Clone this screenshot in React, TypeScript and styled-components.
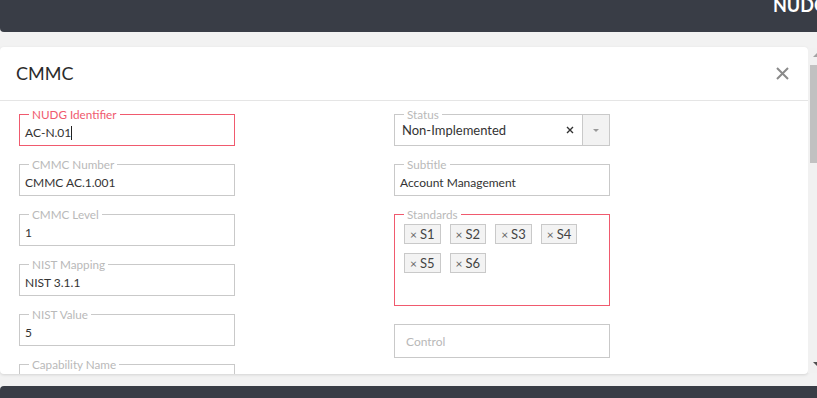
import styled, {createGlobalStyle} from "styled-components"

const GlobalStyle = createGlobalStyle`
  html, body {
    margin: 0;
    padding: 0;
    overflow: hidden;
  }
  body {
    background: #f2f2f2;
    font-family: Lato, "Noto Sans", sans-serif;
    color: #333;
  }
`
const Page = styled.div`
  width: 817px;
  height: 398px;
  display: flex;
  flex-direction: column;
  overflow: hidden;
`
const TopBar = styled.div`
  flex: none;
  height: 32px;
  background: #393d46;
  border-bottom-left-radius: 4px;
  display: flex;
  justify-content: flex-end;
  align-items: flex-start;
  overflow: hidden;
`
const Brand = styled.div`
  color: #fff;
  font-weight: 700;
  font-size: 18px;
  line-height: 18px;
  margin-top: -4px;
  margin-right: -10px;
  white-space: nowrap;
`
const Main = styled.div`
  flex: none;
  height: 327px;
  margin-top: 15px;
  display: flex;
`
const Card = styled.div`
  flex: none;
  width: 808px;
  background: #fff;
  border-radius: 4px;
  box-shadow: 0 1px 3px rgba(0, 0, 0, .13);
  display: flex;
  flex-direction: column;
  overflow: hidden;
`
const Header = styled.div`
  flex: none;
  height: 54px;
  box-sizing: border-box;
  border-bottom: 1px solid #e5e5e5;
  display: flex;
  align-items: center;
  justify-content: space-between;
  padding: 0 19px 1px 16px;
`
const Title = styled.div`
  font-size: 18px;
  color: #2b2b2b;
`
const CloseBtn = styled.button`
  border: 0;
  background: none;
  padding: 0;
  display: flex;
  cursor: pointer;
`
const Body = styled.div`
  flex: 1;
  overflow: hidden;
  display: grid;
  grid-template-columns: 216px 216px;
  column-gap: 159px;
  align-items: start;
  padding: 13px 0 0 19px;
`
const Column = styled.div`
  display: flex;
  flex-direction: column;
  gap: 18px;
`
const Box = styled.div<{ $active?: boolean; $h?: number }>`
  position: relative;
  height: ${p => p.$h ?? 32}px;
  box-sizing: border-box;
  border: 1px solid ${p => p.$active ? '#f05a6e' : '#c9c9c9'};
  background: #fff;
`
const Legend = styled.span<{ $active?: boolean }>`
  position: absolute;
  top: -8px;
  left: 9px;
  padding: 0 3px;
  background: #fff;
  font-size: 11.7px;
  line-height: 14px;
  color: ${p => p.$active ? '#f05a6e' : '#b9b9b9'};
  white-space: nowrap;
`
const Value = styled.div`
  padding: 10px 5px 0;
  font-size: 12px;
  line-height: 16px;
  color: #333;
  white-space: nowrap;
`
const Caret = styled.span`
  display: inline-block;
  width: 1px;
  height: 14px;
  background: #222;
  vertical-align: -3px;
`
const Select = styled.div`
  display: flex;
  height: 100%;
  align-items: stretch;
`
const SelectValue = styled.div`
  flex: 1;
  display: flex;
  align-items: center;
  padding-left: 7px;
  font-size: 13px;
  color: #333;
`
const Clear = styled.div`
  display: flex;
  align-items: center;
  padding: 0 8px 0 6px;
`
const Toggle = styled.div`
  width: 26px;
  border-left: 1px solid #c9c9c9;
  background: #f2f2f2;
  display: flex;
  align-items: center;
  justify-content: center;
`
const Arrow = styled.span`
  width: 0;
  height: 0;
  border-left: 3px solid transparent;
  border-right: 3px solid transparent;
  border-top: 3px solid #999;
  margin-top: 1px;
`
const Tags = styled.div`
  display: flex;
  flex-wrap: wrap;
  gap: 9px 9px;
  padding: 9px 9px;
`
const Tag = styled.div`
  height: 20px;
  box-sizing: border-box;
  border: 1px solid #c9c9c9;
  background: #f3f3f3;
  display: flex;
  align-items: center;
  gap: 3px;
  padding: 0 5px 0 5px;
  font-size: 13px;
  color: #444;
`
const TagX = styled.span`
  font-size: 12px;
  color: #666;
`
const Placeholder = styled.div`
  height: 100%;
  display: flex;
  align-items: center;
  padding-left: 11px;
  font-size: 12px;
  color: #b8b8b8;
`
const Scrollbar = styled.div`
  flex: none;
  width: 17px;
  margin: 1px 0;
  background: #f1f1f1;
  display: flex;
  flex-direction: column;
  align-items: center;
`
const ScrollUp = styled.span`
  margin-top: 5px;
  border-left: 4px solid transparent;
  border-right: 4px solid transparent;
  border-bottom: 4px solid #a3a3a3;
`
const Thumb = styled.div`
  align-self: stretch;
  margin: 8px 2px 0;
  height: 98px;
  background: #c1c1c1;
`
const ScrollDown = styled.span`
  margin-top: auto;
  margin-bottom: 7px;
  border-left: 4px solid transparent;
  border-right: 4px solid transparent;
  border-top: 4px solid #505050;
`
const Footer = styled.div`
  flex: none;
  height: 40px;
  margin-top: 12px;
  background: #393d46;
  border-top-left-radius: 4px;
`

function Field({label, value, active, caret}: { label: string; value: string; active?: boolean; caret?: boolean }) {
  return <Box $active={active}>
    <Legend $active={active}>{label}</Legend>
    <Value>{value}{caret && <Caret/>}</Value>
  </Box>
}

const standards = ['S1', 'S2', 'S3', 'S4', 'S5', 'S6']

export default function App() {
  return <Page>
    <GlobalStyle/>
    <TopBar>
      <Brand>NUDG</Brand>
    </TopBar>
    <Main>
      <Card>
        <Header>
          <Title>CMMC</Title>
          <CloseBtn>
            <svg width="13" height="13" viewBox="0 0 13 13">
              <path d="M1 1L12 12M12 1L1 12" stroke="#8a8a8a" strokeWidth="2" fill="none"/>
            </svg>
          </CloseBtn>
        </Header>
        <Body>
          <Column>
            <Field label="NUDG Identifier" value="AC-N.01" active caret/>
            <Field label="CMMC Number" value="CMMC AC.1.001"/>
            <Field label="CMMC Level" value="1"/>
            <Field label="NIST Mapping" value="NIST 3.1.1"/>
            <Field label="NIST Value" value="5"/>
            <Field label="Capability Name" value=""/>
          </Column>
          <Column>
            <Box>
              <Legend>Status</Legend>
              <Select>
                <SelectValue>Non-Implemented</SelectValue>
                <Clear>
                  <svg width="8" height="8" viewBox="0 0 8 8">
                    <path d="M1 1L7 7M7 1L1 7" stroke="#333" strokeWidth="1.4" fill="none"/>
                  </svg>
                </Clear>
                <Toggle><Arrow/></Toggle>
              </Select>
            </Box>
            <Field label="Subtitle" value="Account Management"/>
            <Box $active $h={92}>
              <Legend>Standards</Legend>
              <Tags>
                {standards.map(s => <Tag key={s}><TagX>×</TagX>{s}</Tag>)}
              </Tags>
            </Box>
            <Box $h={34}>
              <Placeholder>Control</Placeholder>
            </Box>
          </Column>
        </Body>
      </Card>
      <Scrollbar>
        <ScrollUp/>
        <Thumb/>
        <ScrollDown/>
      </Scrollbar>
    </Main>
    <Footer/>
  </Page>
}
